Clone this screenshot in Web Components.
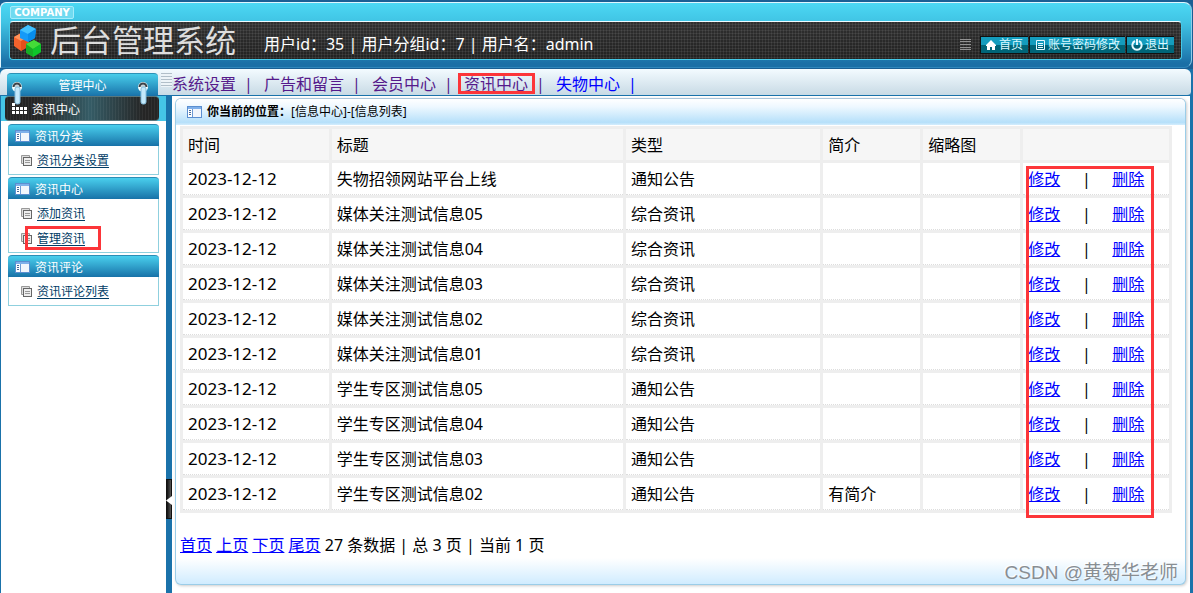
<!DOCTYPE html>
<html lang="zh-CN">
<head>
<meta charset="utf-8">
<meta name="viewport" content="width=device-width, initial-scale=1">
<title>后台管理系统</title>
<style>
html{height:100%}
body{margin:0;min-height:100%;display:flex;flex-direction:column;position:relative;background:#1a72aa;color:#000;font:16px/22px "Noto Sans","Noto Sans CJK SC",sans-serif}
.workspace{display:flex;flex:1;background:#fff;border-left:1px solid #1a72aa;border-right:3px solid #1a72aa;position:relative}
admin-content{flex:1;min-width:0}
</style>
</head>
<body>
<admin-header>
  <span slot="title">后台管理系统</span>
  <span slot="user">用户id：35 | 用户分组id：7 | 用户名：admin</span>
  <tool-link icon="home">首页</tool-link>
  <tool-link icon="list">账号密码修改</tool-link>
  <tool-link icon="power">退出</tool-link>
</admin-header>
<admin-nav></admin-nav>
<div class="workspace">
  <side-menu>
    <side-section heading="资讯分类"><side-item>资讯分类设置</side-item></side-section>
    <side-section heading="资讯中心"><side-item>添加资讯</side-item><side-item marked>管理资讯</side-item></side-section>
    <side-section heading="资讯评论"><side-item>资讯评论列表</side-item></side-section>
  </side-menu>
  <side-splitter></side-splitter>
  <admin-content>
    <news-table></news-table>
    <page-links></page-links>
  </admin-content>
</div>
<water-mark>CSDN @黄菊华老师</water-mark>
<script>
function define(name, html, setup) {
  const template = document.createElement('template');
  template.innerHTML = html;
  customElements.define(name, class extends HTMLElement {
    constructor() {
      super();
      this.attachShadow({ mode: 'open' }).append(template.content.cloneNode(true));
    }
    connectedCallback() {
      if (setup && !this.ready) { this.ready = true; setup(this, this.shadowRoot); }
    }
  });
}

const windowIcon = `<svg width="15" height="12" viewBox="0 0 15 12" aria-hidden="true"><rect x=".5" y=".5" width="14" height="11" fill="#fff" stroke="#5b8fd0"/><rect x="1" y="1" width="13" height="2" fill="#7fb0ea"/><path d="M5.500 3v8" stroke="#6c9bd6"/><path d="M2 4.500h2M2 6.500h2M2 8.500h2" stroke="#4a6a98"/><rect x="6" y="3" width="8" height="8" fill="#f2f6fc"/></svg>`;

const ring = side => `<svg class="ring ${side}" width="13" height="24" aria-hidden="true"><circle cx="6" cy="6" r="5" fill="#f7ffff"/><path d="M2.500 6a3.500 3.500 0 0 1 7 0" fill="#c8d4da" stroke="#3c4248" stroke-width="2"/><rect x="4" y="6" width="5" height="17" rx="2" fill="#c4e9fb" stroke="#84bcdb"/></svg>`;

define('admin-header', `
<style>
:host{display:block;background:#1a5f94;padding:2px 1px 1px 0}
.frame{border:1px solid #dff6ff;border-right-color:#8fcdea;border-bottom-color:#2f86bb;border-radius:6px 8px 8px 0;padding:3px 9px 7px 8px;
  background:linear-gradient(#4cd8f4 0,#40c4e4 19px,#2486b8 50px,#1b6fa6 60px)}
.company{display:block;box-sizing:border-box;width:64px;height:13px;margin:0 0 2px 1px;border:1px solid #a4ecfb;border-radius:2px;background:#6fdaf0;color:#fff;font:bold 10px/11px "DejaVu Sans",sans-serif;text-align:center}
.bar{display:flex;align-items:center;height:37px;border:1px solid #46c8e6;border-top-color:#effcff;border-radius:4px;
  background:repeating-linear-gradient(90deg,#0000 0 2px,#ffffff12 2px 3px),repeating-linear-gradient(#0000 0 2px,#ffffff12 2px 3px),linear-gradient(#303030,#222)}
.logo{margin-left:3px;flex:none}
.title{font-size:31px;line-height:37px;color:#dedede;margin-left:9px;white-space:nowrap}
.user{color:#fff;margin:6px auto 0 28px;white-space:nowrap}
.tools{display:flex;gap:1px;align-items:center;margin:9px 7px 0 0}
.menu{margin:0 8px 0 0}
</style>
<div class="frame">
  <span class="company">COMPANY</span>
  <div class="bar">
    <svg class="logo" width="28" height="34" viewBox="0 0 28 34" aria-hidden="true">
      <path d="M1 13l7-4 8 4v9l-8 5-7-5z" fill="#f4622c"/><path d="M1 13l7-4 8 4-8 4z" fill="#ff925a"/><path d="M8 17v10l8-5v-9z" fill="#e5501b"/>
      <path d="M7 6l8-5 8 4-1 9-7 4-8-4z" fill="#159af8"/><path d="M7 6l8-5 8 4-8 5z" fill="#42c2ff"/><path d="M15 10v8l7-4 1-9z" fill="#078ded"/>
      <path d="M13 20l8-4 7 4v8l-8 5-7-4z" fill="#16ad25"/><path d="M13 20l8-4 7 4-8 5z" fill="#44dc38"/><path d="M20 25v8l8-5v-8z" fill="#0fc52a"/>
    </svg>
    <div class="title"><slot name="title"></slot></div>
    <div class="user"><slot name="user"></slot></div>
    <div class="tools"><svg class="menu" width="11" height="12" aria-hidden="true"><path d="M0 .5h11M0 2.500h11M0 5.500h11M0 8.500h11M0 10.500h11" stroke="#929292"/></svg><slot></slot></div>
  </div>
</div>`);

define('tool-link', `
<style>
:host{display:block}
a{display:flex;align-items:center;gap:2px;height:16px;padding:0 5px 0 4px;border:1px solid #111;border-right:0;background:linear-gradient(#149cbd 50%,#006578 50%);color:#d9f8ff;font-size:12px;line-height:16px;text-decoration:none;white-space:nowrap}
</style>
<a href="#"><svg width="12" height="12" viewBox="0 0 12 12" aria-hidden="true"></svg><span><slot></slot></span></a>`, (el, root) => {
  root.querySelector('svg').innerHTML = {
    home: '<path d="M6 1L1 6v1h1v4h3V8h2v3h3V7h1V6z" fill="#fff"/>',
    list: '<path d="M2.500 1.500h8v9h-8zM4 4.500h5M4 6.500h5M4 8.500h5" fill="none" stroke="#e6faff"/>',
    power: '<path d="M4 2a4.600 4.600 0 1 0 4 0M6 0v6" fill="none" stroke="#e6faff" stroke-width="2"/>'
  }[el.getAttribute('icon')];
});

define('admin-nav', `
<style>
:host{display:flex;position:relative;height:26px;margin-right:2px;border-bottom:1px solid #1a72aa;border-radius:6px 6px 4px 0;background:linear-gradient(#f3fbff,#c8dae5)}
.tab{box-sizing:border-box;width:151px;margin:4px 3px 0 7px;border-radius:4px 4px 0 0;background:linear-gradient(#48cdea,#1b77ad);border-top:1px solid #2b92b7;color:#fff;font-size:12px;line-height:24px;text-align:center;height:22px;flex:none}
.ring{position:absolute;z-index:2;top:12px}
.left{left:11px}.right{left:137px}
nav{display:flex;align-items:center}
.stripes{width:11px;height:14px;margin:-4px 0 0;background:repeating-linear-gradient(#b1bfc9 0 1px,#edf4f8 1px 3px)}
a{position:relative;color:#551a8b;text-decoration:none;white-space:nowrap;display:flex;line-height:24px;margin-top:4px}
a i{font-style:normal;width:20px;padding-left:8px}
a.new{color:#00f}
a.marked::after{content:"";position:absolute;left:-6px;top:1px;right:21px;height:15px;border:3px solid #fc3539}
</style>
<div class="tab">管理中心</div>
${ring('left')}${ring('right')}
<nav><span class="stripes"></span>
<a href="#">系统设置<i>|</i></a><a href="#">广告和留言<i>|</i></a><a href="#">会员中心<i>|</i></a><a href="#" class="marked">资讯中心<i>|</i></a><a href="#" class="new">失物中心<i>|</i></a></nav>`);

define('side-menu', `
<style>
:host{display:block;width:165px;flex:none;background:linear-gradient(#45c5e6 25px,#fff 25px)}
.current{display:flex;align-items:center;gap:5px;height:25px;margin:0 7px 0 4px;padding-left:7px;border-radius:4px;border:1px solid #59777d;border-width:1px 0;box-sizing:border-box;color:#fff;font-size:12px;
 background:repeating-linear-gradient(90deg,#0000 0 2px,#ffffff0d 2px 3px),linear-gradient(90deg,#252525 20%,#355c66 55%,#252525 90%)}
.current span{padding-top:2px}
.list{display:grid;gap:2px;margin:0 7px;padding-top:3px}
</style>
<div class="current"><svg width="15" height="11" aria-hidden="true"><path d="M1.500 0v11M5.500 4v7M9.500 4v7M13.500 4v7" stroke="#fff" stroke-width="3" stroke-dasharray="3 1"/></svg><span>资讯中心</span></div>
<div class="list"><slot></slot></div>`);

define('side-section', `
<style>
:host{display:block}
h2{display:flex;align-items:center;gap:5px;box-sizing:border-box;height:22px;margin:0;padding:0 7px;border-top:1px solid #2c8db5;border-radius:4px 4px 0 0;background:linear-gradient(#49cfed,#1872a8);color:#fff;font-size:12px;font-weight:400;line-height:22px}
span{padding-top:2px}
.items{padding:2px 0 1px;border:1px solid #8fd0de;border-top:0}
</style>
<h2>${windowIcon}<span></span></h2><div class="items"><slot></slot></div>`, (el, root) => {
  root.querySelector('span').textContent = el.getAttribute('heading');
});

define('side-item', `
<style>
:host{display:flex;align-items:center;gap:5px;height:25px;padding-left:12px;position:relative;font-size:12px}
:host([marked])::after{content:"";position:absolute;left:16px;top:0;width:70px;height:18px;border:3px solid #fc3539}
a{color:#003c65;text-underline-offset:2px}
</style>
<svg width="11" height="11" aria-hidden="true"><path d="M.5 8.500v-8h8v2" fill="#ddd" stroke="#999"/><path d="M.5 8.500h2" stroke="#999"/><rect x="2.500" y="2.500" width="8" height="8" fill="#eee" stroke="#666"/><path d="M4 5.500h5M4 7.500h5" stroke="#999"/></svg><a href="#"><slot></slot></a>`);

define('side-splitter', `
<style>
:host{display:block;width:6px;flex:none;background:#1a72aa;position:relative}
button{position:absolute;top:383px;left:0;width:6px;height:40px;padding:0;border:1px solid #111;background:linear-gradient(90deg,#111,#555);box-sizing:border-box}
svg{position:absolute;left:-1px;top:16px}
</style>
<button type="button" aria-label="收起菜单"><svg width="6" height="9" aria-hidden="true"><path d="M6 0v9L0 4.500z" fill="#fff"/></svg></button>`);

define('admin-content', `
<style>
:host{display:flex;flex-direction:column;padding:2px 4px 8px 3px}
.panel{flex:1;display:flex;flex-direction:column;border:1px solid #9bcde8;border-top-color:#a9c4da;border-radius:6px;box-shadow:1px 1px 3px #ccc;background:linear-gradient(#fff,#d0ecff) bottom/100% 26px no-repeat #fff}
header{display:flex;align-items:center;height:26px;padding:0 11px;border-radius:5px 5px 0 0;background:linear-gradient(#fff,#eef8ff 30%,#b6e0fa 90%,#d4edfd);font-size:12px;white-space:nowrap}
header svg{margin-right:5px}
.body{padding:1px 13px 0 4px}
</style>
<section class="panel"><header>${windowIcon}<b>你当前的位置：</b><span>[信息中心]-[信息列表]</span></header><div class="body"><slot></slot></div></section>`);

define('news-table', `
<style>
:host{display:block;position:relative}
table{width:100%;table-layout:fixed;border-spacing:3px;background:#eee}
th,td{box-sizing:border-box;height:32px;padding:0 5px;background:#fff;text-align:left;font-weight:400;line-height:22px;white-space:nowrap}
th{height:31px;background:#f6f6f6}
td{border-bottom:1px dotted #ddd}
td.date{font-size:17px}
a{color:#00f}
.actions{display:flex}
.actions span{width:52px;text-align:center;flex:none}
.mark{position:absolute;top:40px;bottom:-5px;right:18px;width:122px;border:3px solid #fc3539;pointer-events:none}
</style>
<table><colgroup><col style="width:15%"><col style="width:30%"><col style="width:20%"><col style="width:10%"><col style="width:10%"><col style="width:15%"></colgroup>
<thead><tr><th>时间</th><th>标题</th><th>类型</th><th>简介</th><th>缩略图</th><th></th></tr></thead><tbody></tbody></table>
<div class="mark"></div>`, (el, root) => {
  const rows = [['失物招领网站平台上线', '通知公告', '']];
  for (const n of ['05', '04', '03', '02', '01']) rows.push(['媒体关注测试信息' + n, '综合资讯', '']);
  for (const n of ['05', '04', '03', '02']) rows.push(['学生专区测试信息' + n, '通知公告', n === '02' ? '有简介' : '']);
  root.querySelector('tbody').innerHTML = rows.map(([title, type, intro]) =>
    `<tr><td class="date">2023-12-12</td><td>${title}</td><td>${type}</td><td>${intro}</td><td></td><td><div class="actions"><a href="#">修改</a><span>|</span><a href="#">删除</a></div></td></tr>`).join('');
});

define('page-links', `
<style>
:host{display:block;margin-top:21px}
a{color:#00f}
</style>
<a href="#">首页</a> <a href="#">上页</a> <a href="#">下页</a> <a href="#">尾页</a> 27 条数据 | 总 3 页 | 当前 1 页`);

define('water-mark', `
<style>
:host{display:block;position:absolute;right:15px;bottom:8px;font:19px/24px "Liberation Sans","Noto Sans CJK SC",sans-serif;color:#888e93;text-shadow:-1px -1px 1px #fff;pointer-events:none}
</style><slot></slot>`);
</script>
</body>
</html>
